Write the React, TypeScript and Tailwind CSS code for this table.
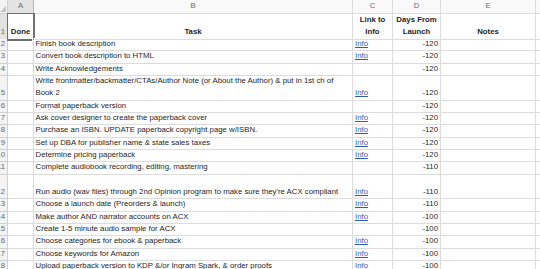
import React from 'react';

type Row = { n: number; task: string; link: boolean; days: string; tall?: boolean };

const rows: Row[] = [
  { n: 2, task: 'Finish book description', link: true, days: '-120' },
  { n: 3, task: 'Convert book description to HTML', link: true, days: '-120' },
  { n: 4, task: 'Write Acknowledgements', link: false, days: '-120' },
  {
    n: 5,
    task: 'Write frontmatter/backmatter/CTAs/Author Note (or About the Author) & put in 1st ch of Book 2',
    link: true,
    days: '-120',
    tall: true,
  },
  { n: 6, task: 'Format paperback version', link: false, days: '-120' },
  { n: 7, task: 'Ask cover designer to create the paperback cover', link: true, days: '-120' },
  { n: 8, task: 'Purchase an ISBN. UPDATE paperback copyright page w/ISBN.', link: true, days: '-120' },
  { n: 9, task: 'Set up DBA for publisher name & state sales taxes', link: true, days: '-120' },
  { n: 10, task: 'Determine pricing paperback', link: true, days: '-120' },
  { n: 11, task: 'Complete audiobook recording, editing, mastering', link: false, days: '-110' },
  {
    n: 12,
    task: "Run audio (wav files) through 2nd Opinion program to make sure they're ACX compliant",
    link: true,
    days: '-110',
    tall: true,
  },
  { n: 13, task: 'Choose a launch date (Preorders & launch)', link: true, days: '-110' },
  { n: 14, task: 'Make author AND narrator accounts on ACX', link: true, days: '-100' },
  { n: 15, task: 'Create 1-5 minute audio sample for ACX', link: false, days: '-100' },
  { n: 16, task: 'Choose categories for ebook & paperback', link: true, days: '-100' },
  { n: 17, task: 'Choose keywords for Amazon', link: true, days: '-100' },
  { n: 18, task: 'Upload paperback version to KDP &/or Ingram Spark, & order proofs', link: true, days: '-100' },
];

const cols = 'grid grid-cols-[8px_26px_319px_40px_48px_95px_1fr]';
const line = 'border-r border-b border-[#dcdcdc]';
const cell = `${line} flex items-end overflow-hidden`;

const App: React.FC = () => {
  return (
    <div
      className="w-[540px] h-[269px] overflow-hidden bg-white text-[#1e1e1e] text-[7.8px] leading-[12.33px]"
      style={{ fontFamily: '"Liberation Sans", Arial, sans-serif' }}
    >
      {/* Column letters */}
      <div className={`${cols} h-[14px] text-[#6a6a6a]`}>
        <div className="relative bg-[#f3f3f3] border-r border-b border-[#d0d0d0]">
          <div className="absolute right-[1px] bottom-[1px] w-0 h-0 border-l-[6px] border-l-transparent border-b-[6px] border-b-[#c4c4c4]" />
        </div>
        <div className="bg-[#e3e3e3] border-r border-b border-[#b8b8b8] flex items-center justify-center">A</div>
        <div className={`${line} bg-[#f9f9f9] flex items-center justify-center`}>B</div>
        <div className={`${line} bg-[#f9f9f9] flex items-center justify-center`}>C</div>
        <div className={`${line} bg-[#f9f9f9] flex items-center justify-center`}>D</div>
        <div className={`${line} bg-[#f9f9f9] flex items-center justify-center`}>E</div>
        <div className="bg-[#f9f9f9] border-b border-[#dcdcdc]" />
      </div>

      {/* Header row */}
      <div className={`${cols} h-[25px] font-bold`}>
        <div className="bg-[#e3e3e3] border-r border-b border-[#b8b8b8] flex items-end justify-end pr-[2px] font-normal text-[#6a6a6a]">
          1
        </div>
        <div className="relative border-r border-b border-[#6f6f6f] outline outline-1 outline-[#6f6f6f] flex items-end justify-center">
          Done
          <div className="absolute -right-[2px] -bottom-[2px] w-[3px] h-[3px] bg-[#6f6f6f] border border-white" />
        </div>
        <div className={`${line} flex items-end justify-center`}>Task</div>
        <div className={`${line} flex flex-col justify-end items-center text-center`}>
          <span>Link to</span>
          <span>Info</span>
        </div>
        <div className={`${line} flex flex-col justify-end items-center text-center whitespace-nowrap`}>
          <span>Days From</span>
          <span>Launch</span>
        </div>
        <div className={`${line} flex items-end justify-center`}>Notes</div>
        <div className="border-b border-[#dcdcdc]" />
      </div>

      {rows.map((r) => (
        <div key={r.n} className={`${cols} ${r.tall ? 'h-[24.67px]' : 'h-[12.33px]'}`}>
          <div className="bg-[#f3f3f3] border-r border-b border-[#d0d0d0] flex items-end justify-end pr-[2px] text-[#6a6a6a] whitespace-nowrap overflow-hidden">
            {r.n}
          </div>
          <div className={cell} />
          <div className={`${cell} pl-[1.5px]`}>
            <span className={r.tall ? 'block' : 'whitespace-nowrap'}>{r.task}</span>
          </div>
          <div className={`${cell} pl-[2px]`}>
            {r.link && <span className="text-[#2f5fb3] underline underline-offset-[1px]">Info</span>}
          </div>
          <div className={`${cell} justify-end pr-[2px]`}>{r.days}</div>
          <div className={cell} />
          <div className="border-b border-[#dcdcdc]" />
        </div>
      ))}
    </div>
  );
};

export default App;
